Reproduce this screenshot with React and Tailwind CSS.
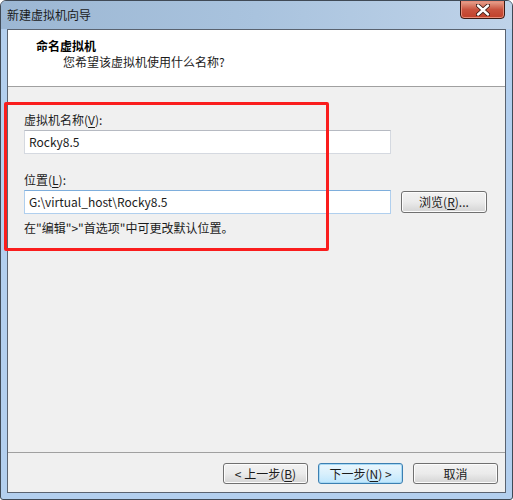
import React from 'react';

const font = { fontFamily: '"Noto Sans CJK SC", "Noto Sans", sans-serif' };

// Win7 style push button
const Button = ({ children, primary }) => (
  <div
    className={`w-[85px] h-[21px] rounded-[3px] border flex items-center justify-center text-[12px] leading-[16px] text-[#1b1b1b] ${
      primary
        ? 'border-[#3c7fb1] bg-gradient-to-b from-[#eaf6fd] via-[#d9f0fc] to-[#bee6fd] shadow-[inset_0_0_0_1px_#a7d9f5]'
        : 'border-[#707070] bg-gradient-to-b from-[#f2f2f2] via-[#ebebeb] to-[#d4d4d4] shadow-[inset_0_0_0_1px_#fcfcfc]'
    }`}
  >
    {children}
  </div>
);

const U = ({ children }) => <span className="underline underline-offset-[2px]">{children}</span>;

export default function App() {
  return (
    <div className="w-[513px] h-[500px] bg-white" style={font}>
      <div className="relative w-[513px] h-[500px] flex flex-col rounded-t-[6px] rounded-b-[3px] border border-[#404a56] bg-[#b3cfee] overflow-hidden">
        {/* title bar */}
        <div className="h-[28px] flex items-start bg-gradient-to-r from-[#9cb7d3] via-[#a9c3de] to-[#bfd3e9]">
          <span className="pl-[6px] pt-[6px] text-[12px] leading-[16px] text-[#1a1a1a]">新建虚拟机向导</span>
          <div className="ml-auto mr-[7px] w-[45px] h-[19px] -mt-px rounded-b-[4px] border border-[#3b1a14] bg-gradient-to-b from-[#e9a592] via-[#c9533f] to-[#c0402a] flex items-center justify-center shadow-[inset_0_0_0_1px_#e88c78]">
            <svg width="14" height="12" viewBox="0 0 14 12">
              <path d="M2 1.5 L12 10.5 M12 1.5 L2 10.5" stroke="#3a1a14" strokeWidth="4.2" strokeLinecap="round" />
              <path d="M2 1.5 L12 10.5 M12 1.5 L2 10.5" stroke="#ffffff" strokeWidth="2.4" strokeLinecap="round" />
            </svg>
          </div>
        </div>

        {/* client area */}
        <div className="flex-1 mx-[6px] mb-[6px] border border-[#5a6370] bg-[#f0f0f0] flex flex-col text-[12px] leading-[16px] text-[#1b1b1b]">
          <div className="h-[57px] bg-white border-b border-[#a0a0a0] pt-[8px]">
            <div className="pl-[28px] font-bold text-black">命名虚拟机</div>
            <div className="pl-[55px]">您希望该虚拟机使用什么名称?</div>
          </div>

          <div className="flex-1 pl-[16px] pt-[25px]">
            <div>虚拟机名称(<U>V</U>):</div>
            <div className="mt-[2px] w-[367px] h-[24px] border border-[#d5d9e0] border-t-[#b6bac2] bg-white flex items-center pl-[4px]">
              Rocky8.5
            </div>

            <div className="mt-[18px]">位置(<U>L</U>):</div>
            <div className="mt-[2px] flex items-center gap-[10px]">
              <div className="w-[367px] h-[24px] border border-[#b0cfee] border-t-[#7eaedc] bg-white flex items-center pl-[4px]">
                G:\virtual_host\Rocky8.5
              </div>
              <div className="w-[86px] h-[22px] rounded-[3px] border border-[#707070] bg-gradient-to-b from-[#f2f2f2] via-[#ebebeb] to-[#d4d4d4] shadow-[inset_0_0_0_1px_#fcfcfc] flex items-center justify-center">
                浏览(<U>R</U>)...
              </div>
            </div>

            <div className="mt-[6px]">在"编辑">"首选项"中可更改默认位置。</div>
          </div>

          <div className="h-[40px] border-t border-[#a0a0a0] flex items-start justify-end gap-[10px] pt-[10px] pr-[7px]">
            <Button>&lt; 上一步(<U>B</U>)</Button>
            <Button primary>下一步(<U>N</U>) &gt;</Button>
            <Button>取消</Button>
          </div>
        </div>

        {/* annotation box */}
        <div className="absolute left-[3px] top-[101px] w-[325px] h-[149px] border-[3px] border-[#fa1d1d] rounded-[2px]" />
      </div>
    </div>
  );
}
